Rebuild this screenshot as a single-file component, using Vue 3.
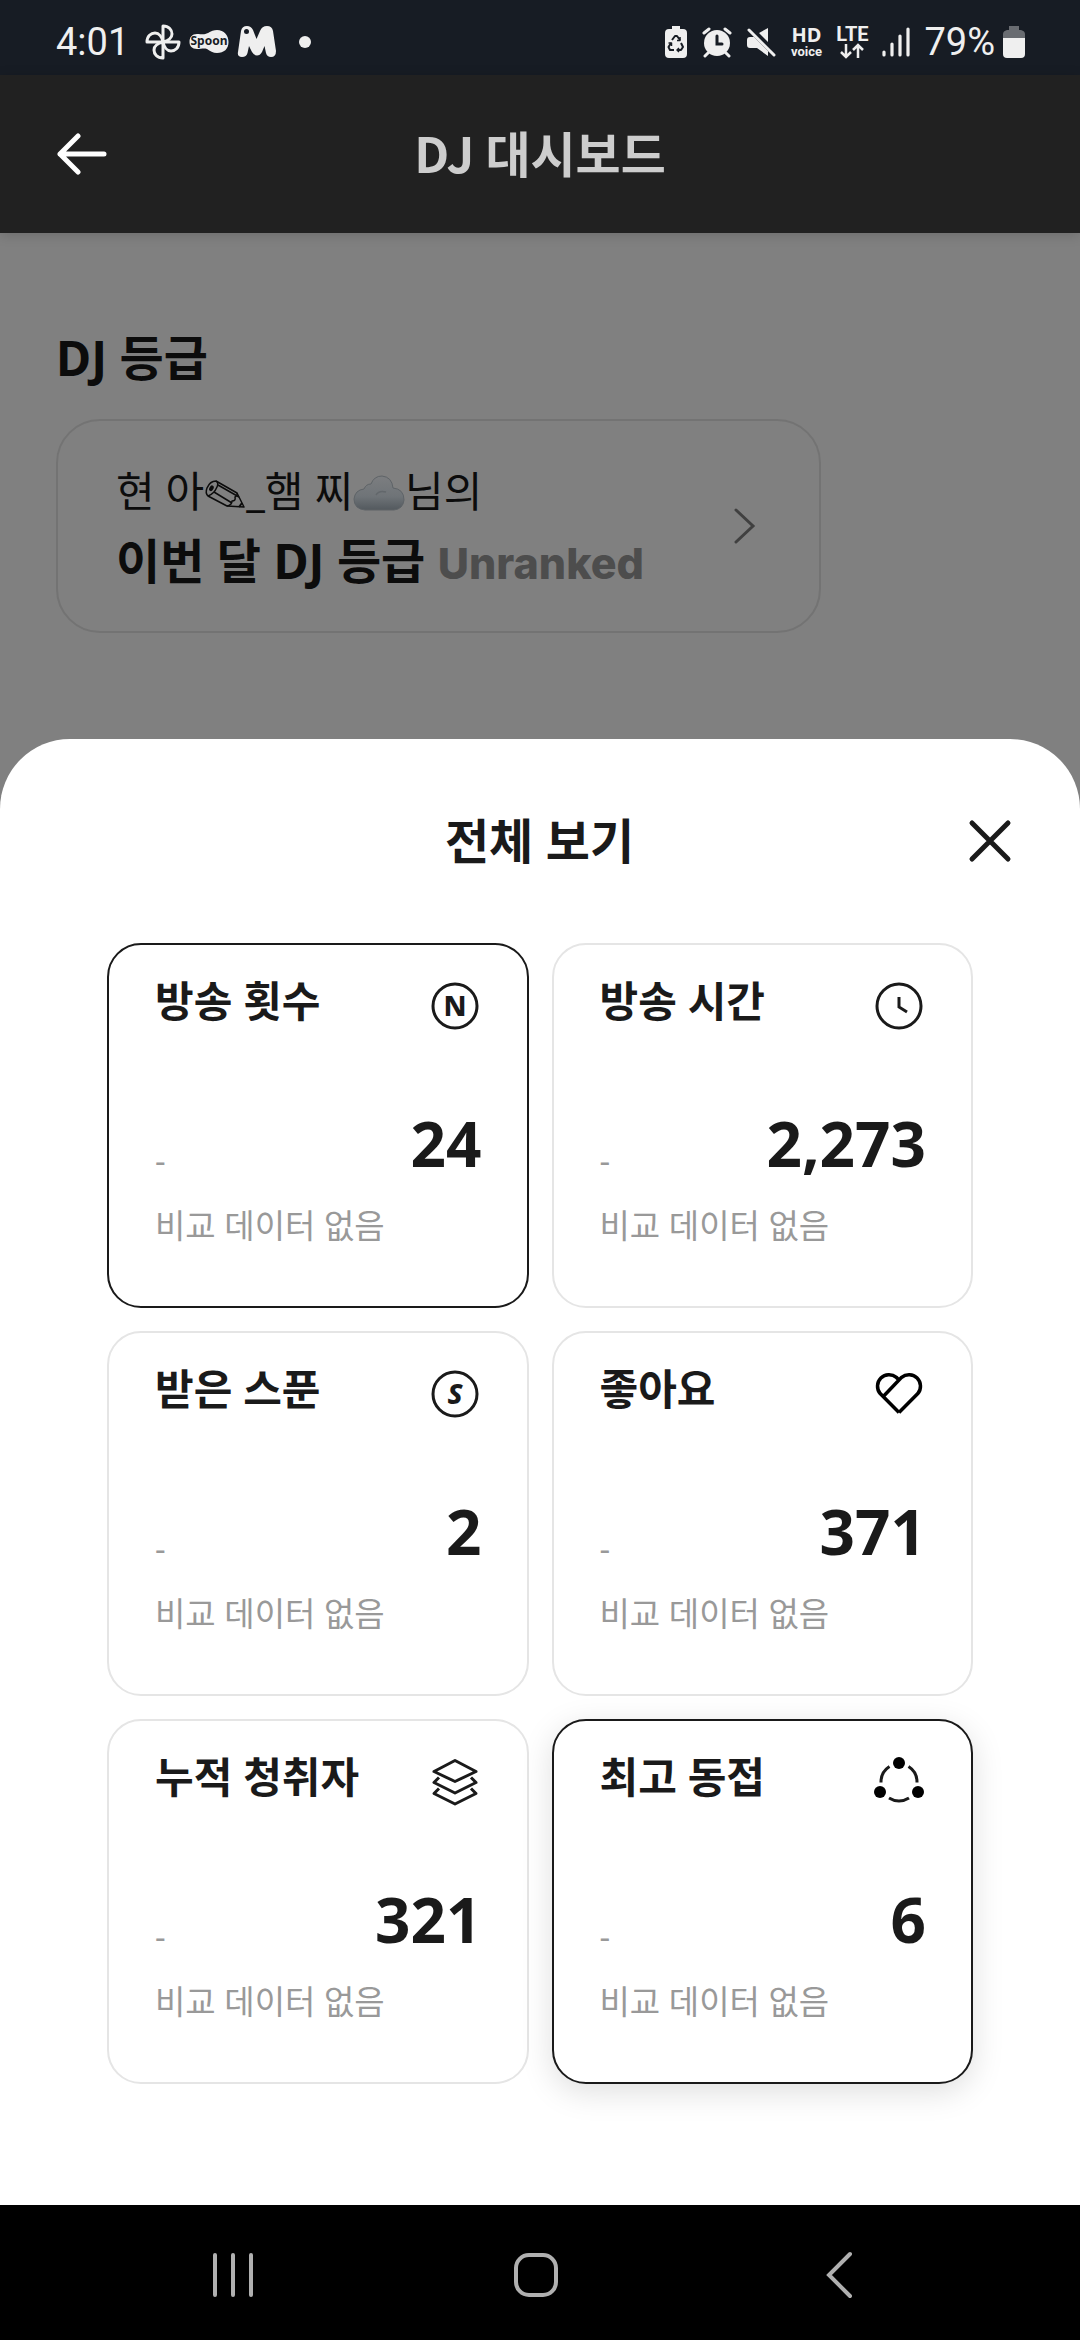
<script setup>
import { ref } from 'vue'

const nickname = { first: '현 아', middle: '_햄 찌', last: '님의' }

const stats = [
  { id: 'count', title: '방송 횟수', value: '24', selected: true },
  { id: 'time', title: '방송 시간', value: '2,273' },
  { id: 'spoon', title: '받은 스푼', value: '2' },
  { id: 'like', title: '좋아요', value: '371' },
  { id: 'listener', title: '누적 청취자', value: '321' },
  { id: 'peak', title: '최고 동접', value: '6', selected: true, raised: true },
]

const sheetTitle = ref('전체 보기')
</script>

<template>
  <div class="screen">
    <div class="status">
      <div class="status-left">
        <span class="clock">4:01</span>
        <svg class="pinwheel" width="36" height="36" viewBox="0 0 36 36" aria-hidden="true">
          <g fill="none" stroke="#efefef" stroke-width="3" stroke-linejoin="round">
            <path d="M18 18V2C24 2 27 6 27 10C27 14 23 17 18 18" />
            <path d="M18 18H34C34 24 30 27 26 27C22 27 19 23 18 18" />
            <path d="M18 18V34C12 34 9 30 9 26C9 22 13 19 18 18" />
            <path d="M18 18H2C2 12 6 9 10 9C14 9 17 13 18 18" />
          </g>
        </svg>
        <svg width="40" height="24" viewBox="0 0 40 24" aria-hidden="true">
          <path fill="#efefef" d="M8 4C13 4 15 5 19 3C22 1 25 0 28 0C35 0 39.500 5 39.500 12C39.500 19 35 23 28 23C24 23 21 21 18 19C15 18 12 19 8 19C3 19 0.500 16 0.500 12C0.500 7 3 4 8 4Z" />
          <text class="spoon-word" x="20" y="15" text-anchor="middle">Spoon</text>
        </svg>
        <svg width="40" height="32" viewBox="0 0 40 32" aria-hidden="true">
          <path fill="#efefef" d="M1 26L4 5Q5 0 10 0Q14 0 16 4L19.500 13L23 5Q25 0 30 0Q35 0 36 5L39 25Q39 31 34 31Q30 31 29 27L27.500 20L25 26Q23 29.500 20 29.500Q17 29.500 15 26L12 20L10.500 27Q9.500 31 5 31Q0 31 1 26Z" />
          <circle cx="9.500" cy="5.500" r="2.500" fill="#171c24" />
        </svg>
        <span class="dot"></span>
      </div>
      <div class="status-right">
        <svg width="24" height="34" viewBox="0 0 24 34" aria-hidden="true">
          <path fill="#efefef" d="M8 1H16V4H19Q23 4 23 8V29Q23 33 19 33H5Q1 33 1 29V8Q1 4 5 4H8Z" />
          <g fill="none" stroke="#171c24" stroke-width="2" stroke-linejoin="round">
            <path d="M8 15L11 11H13L16 15M17 18L19 22L17 25H13M10 25H6L4.500 22L7 18" />
            <path d="M16 12V15.500H13M15 23L13 25L15 27M4.500 18H7.500V21" stroke-width="1.500" />
          </g>
        </svg>
        <svg width="30" height="32" viewBox="0 0 30 32" aria-hidden="true">
          <circle cx="15" cy="17" r="13" fill="#efefef" />
          <path d="M2 7L7 3M28 7L23 3M6 27L3 30M24 27L27 30" stroke="#efefef" stroke-width="3" stroke-linecap="round" />
          <path d="M15 10V18H20" fill="none" stroke="#171c24" stroke-width="3" stroke-linecap="round" />
        </svg>
        <svg width="30" height="32" viewBox="0 0 30 32" aria-hidden="true">
          <path fill="#efefef" d="M1 14Q1 11 4 11H8L22 25V30L11 22H4Q1 22 1 19ZM13 7L22 2V16Z" />
          <path d="M3 4L28 29" stroke="#efefef" stroke-width="3" stroke-linecap="round" />
        </svg>
        <span class="hd"><b>HD</b><small>voice</small></span>
        <span class="lte">
          <b>LTE</b>
          <svg width="24" height="16" viewBox="0 0 24 16" aria-hidden="true">
            <path d="M6 1V13M1 9L6 14L11 9M18 15V3M13 7L18 2L23 7" fill="none" stroke="#efefef" stroke-width="2.500" />
          </svg>
        </span>
        <svg width="28" height="32" viewBox="0 0 28 32" aria-hidden="true">
          <path d="M2 26V29M10 18V29M18 10V29M26 3V29" stroke="#efefef" stroke-width="3.200" stroke-linecap="round" />
        </svg>
        <span class="power">
          <span class="clock">79%</span>
          <svg width="22" height="32" viewBox="0 0 22 32" aria-hidden="true">
            <path fill="#696c71" d="M6 0H16V4H18Q22 5 22 8V12H0V8Q0 5 4 4H6Z" />
            <path fill="#efefef" d="M0 12H22V28Q22 32 18 32H4Q0 32 0 28Z" />
          </svg>
        </span>
      </div>
    </div>

    <header class="appbar">
      <button class="icon-button" type="button" aria-label="뒤로">
        <svg width="50" height="42" viewBox="0 0 50 42">
          <path d="M21 3L3 21L21 39M3 21H47" fill="none" stroke="#fff" stroke-width="5" stroke-linecap="round" stroke-linejoin="round" />
        </svg>
      </button>
      <h1>DJ 대시보드</h1>
    </header>

    <main class="page">
      <h2>DJ 등급</h2>
      <a class="rank" href="#rank">
        <span class="rank-text">
          <span class="rank-name">
            {{ nickname.first }}<svg class="pencil" width="42" height="34" viewBox="0 0 42 34" aria-hidden="true">
              <g fill="none" stroke="#0c0c0c" stroke-width="1.500" stroke-linejoin="round">
                <path d="M12 4L33 16L40 30L23 29L4 19Q1 16 3 11Q6 4 12 4Z" />
                <path d="M12 4Q15 6 13 10Q10 17 4 19M14 8L35 20M10 15L28 26M33 16Q34 19 31 20Q32 24 28 24Q28 28 23 29" />
                <path d="M35 30L38 26" stroke-width="2" />
              </g>
              <ellipse cx="7.500" cy="11" rx="2" ry="3" transform="rotate(30 7 11)" fill="#0c0c0c" />
            </svg>{{ nickname.middle }}<svg class="cloud" width="52" height="36" viewBox="0 0 52 36" aria-hidden="true">
              <defs>
                <linearGradient id="sky" x1="0" y1="0" x2="0" y2="1">
                  <stop offset="0" stop-color="#7c7e80" />
                  <stop offset="0.600" stop-color="#6f7478" />
                  <stop offset="1" stop-color="#53595e" />
                </linearGradient>
              </defs>
              <path d="M12 35Q1 34 1 24Q2 15 11 14Q13 9 18 9Q21 1 29 1Q39 2 40 13Q51 14 51 25Q50 34 41 35Z" fill="url(#sky)" stroke="#5e6367" stroke-width="1" />
              <path d="M23 20Q26 15 33 17" fill="none" stroke="#62676b" stroke-width="1.500" />
            </svg>{{ nickname.last }}
          </span>
          <span class="rank-grade">이번 달 DJ 등급 <em>Unranked</em></span>
        </span>
        <svg width="22" height="36" viewBox="0 0 22 36" aria-hidden="true">
          <path d="M2 2L19 18L2 34" fill="none" stroke="#404040" stroke-width="3" stroke-linecap="round" />
        </svg>
      </a>
    </main>

    <section class="sheet" role="dialog" aria-labelledby="sheet-title">
      <div class="sheet-head">
        <h2 id="sheet-title">{{ sheetTitle }}</h2>
        <button class="icon-button" type="button" aria-label="닫기">
          <svg width="44" height="44" viewBox="0 0 44 44">
            <path d="M4 4L40 40M40 4L4 40" stroke="#1a1a1a" stroke-width="5" stroke-linecap="round" />
          </svg>
        </button>
      </div>

      <div class="grid">
        <button
          v-for="stat in stats"
          :key="stat.id"
          type="button"
          class="stat"
          :class="{ selected: stat.selected, raised: stat.raised }"
          :aria-pressed="!!stat.selected"
        >
          <span class="stat-head">
            <span class="stat-title">{{ stat.title }}</span>
            <svg width="54" height="54" viewBox="0 0 54 54" aria-hidden="true">
              <g fill="none" stroke="#1a1a1a" stroke-width="3">
                <template v-if="stat.id === 'count'">
                  <circle cx="27" cy="27" r="22" />
                  <text class="letter" x="27" y="37" text-anchor="middle">N</text>
                </template>
                <template v-else-if="stat.id === 'time'">
                  <circle cx="27" cy="27" r="22" />
                  <path d="M27 18V28L35 33" />
                </template>
                <template v-else-if="stat.id === 'spoon'">
                  <circle cx="27" cy="27" r="22" />
                  <text class="letter slanted" x="27" y="37" text-anchor="middle">S</text>
                </template>
                <template v-else-if="stat.id === 'like'">
                  <path stroke="#000" stroke-width="3.500" d="M27 45.400L8.200 26.600A11.500 11.500 0 0 1 24.400 10.400L27 13M10.800 30L29.600 10.400A11.500 11.500 0 0 1 45.800 26.600L27 45.400" />
                </template>
                <template v-else-if="stat.id === 'listener'">
                  <path stroke-linejoin="round" d="M27 5.500L48 16.500L27 26.500L6 16.500Z" />
                  <path stroke-linejoin="round" d="M11 22.500L6 27.500L27 38L48 27.500L43 22.500" />
                  <path stroke-linejoin="round" d="M11 33.500L6 38.500L27 49L48 38.500L43 33.500" />
                </template>
                <template v-else>
                  <path d="M17.500 11.500A18.500 18.500 0 0 0 9 27.500M36.500 11.500A18.500 18.500 0 0 1 45 27.500M17 43A18.500 18.500 0 0 0 37 43" />
                  <g fill="#000" stroke="none">
                    <circle cx="27" cy="8" r="6" />
                    <circle cx="8" cy="37" r="6" />
                    <circle cx="46" cy="37" r="6" />
                  </g>
                </template>
              </g>
            </svg>
          </span>
          <span class="stat-row">
            <span class="stat-diff">-</span>
            <span class="stat-value">{{ stat.value }}</span>
          </span>
          <span class="stat-note">비교 데이터 없음</span>
        </button>
      </div>
    </section>

    <nav class="navbar">
      <button class="icon-button" type="button" aria-label="최근 앱">
        <svg width="44" height="48" viewBox="0 0 44 48">
          <path d="M4 4V44M22 4V44M40 4V44" stroke="#b0b0b0" stroke-width="4" stroke-linecap="round" />
        </svg>
      </button>
      <button class="icon-button" type="button" aria-label="홈">
        <svg width="48" height="48" viewBox="0 0 48 48">
          <rect x="4" y="4" width="40" height="40" rx="13" fill="none" stroke="#b0b0b0" stroke-width="4" />
        </svg>
      </button>
      <button class="icon-button" type="button" aria-label="뒤로 가기">
        <svg width="28" height="48" viewBox="0 0 28 48">
          <path d="M25 3L4 24L25 45" fill="none" stroke="#b0b0b0" stroke-width="4" stroke-linecap="round" />
        </svg>
      </button>
    </nav>
  </div>
</template>

<style>
body {
  margin: 0;
  background: #000;
}
</style>

<style scoped>
.screen {
  display: flex;
  flex-direction: column;
  min-height: 100vh;
  background: #808080;
  color: #1a1a1a;
  font-family: "Noto Sans", "Noto Sans CJK KR", sans-serif;
}

svg {
  flex: none;
}

h1,
h2 {
  margin: 0;
  font-size: 48px;
  line-height: 70px;
  font-weight: 700;
}

.icon-button {
  display: flex;
  align-items: center;
  justify-content: center;
  padding: 0;
  border: 0;
  background: none;
  cursor: pointer;
}

.status {
  display: flex;
  align-items: center;
  justify-content: space-between;
  height: 75px;
  padding: 8px 55px 0 56px;
  box-sizing: border-box;
  background: #171c24;
  color: #efefef;
}

.status-left {
  display: flex;
  align-items: center;
  gap: 8px;
}

.pinwheel {
  margin-left: 8px;
}

.clock {
  font-family: Roboto, sans-serif;
  font-size: 38px;
  line-height: 44px;
}

.spoon-word {
  font: 700 12px "Noto Sans", sans-serif;
  fill: #171c24;
}

.dot {
  width: 12px;
  height: 12px;
  margin-left: 14px;
  border-radius: 50%;
  background: #efefef;
}

.status-right {
  display: flex;
  align-items: center;
  gap: 14px;
}

.hd,
.lte {
  display: flex;
  flex-direction: column;
  align-items: center;
  width: 32px;
  font-family: Roboto, sans-serif;
}

.hd b {
  font-family: "Noto Sans", sans-serif;
  font-size: 20px;
  line-height: 20px;
}

.hd small {
  font-size: 13px;
  font-weight: 700;
  line-height: 14px;
}

.lte b {
  font-size: 20px;
  font-weight: 700;
  line-height: 18px;
}

.power {
  display: flex;
  align-items: center;
  gap: 8px;
}

.appbar {
  display: grid;
  grid-template-columns: 50px 1fr 50px;
  align-items: center;
  height: 158px;
  padding: 0 57px;
  background: #212121;
  box-shadow: 0 2px 12px rgba(0, 0, 0, 0.16);
}

.appbar h1 {
  padding-bottom: 4px;
  color: #cdcdcd;
  font-family: "Noto Sans CJK KR", sans-serif;
  font-size: 49px;
  text-align: center;
}

.page {
  padding: 90px 56px 106px;
  color: #0c0c0c;
}

.rank {
  display: flex;
  align-items: center;
  justify-content: space-between;
  width: 79%;
  margin-top: 26px;
  padding: 35px 63px 35px 58px;
  box-sizing: border-box;
  border: 2px solid #737373;
  border-radius: 44px;
  color: inherit;
  text-decoration: none;
}

.rank-text {
  display: flex;
  flex-direction: column;
  white-space: nowrap;
}

.rank-name,
.rank-grade {
  height: 70px;
  line-height: 70px;
}

.rank-name {
  font-size: 42px;
}

.pencil,
.cloud {
  vertical-align: -4px;
}

.rank-grade {
  font-size: 48px;
  font-weight: 700;
}

.rank-grade em {
  color: #4d4d4d;
  font-family: Inter, sans-serif;
  font-size: 43px;
  font-style: normal;
  font-weight: 800;
  line-height: 44px;
}

.sheet {
  flex: 1;
  padding: 67px 0 100px;
  border-radius: 70px 70px 0 0;
  background: #fff;
}

.sheet-head {
  display: grid;
  grid-template-columns: 44px 1fr 44px;
  align-items: center;
  padding: 0 68px 0 67px;
}

.sheet-head h2 {
  grid-column: 2;
  text-align: center;
}

.grid {
  display: grid;
  grid-template-columns: 1fr 1fr;
  gap: 23px;
  margin-top: 67px;
  padding: 0 107px;
}

.stat {
  display: flex;
  flex-direction: column;
  padding: 34px 45px 58px 46px;
  border: 2px solid #e5e5e5;
  border-radius: 34px;
  background: #fff;
  color: #1a1a1a;
  font-family: inherit;
  text-align: left;
  cursor: pointer;
}

.stat.selected {
  border-color: #1a1a1a;
}

.stat.raised {
  box-shadow: 0 8px 32px rgba(0, 0, 0, 0.13);
}

.stat-head {
  display: flex;
  align-items: flex-start;
  justify-content: space-between;
}

.stat-title {
  font-size: 42px;
  font-weight: 700;
  line-height: 44px;
}

.letter {
  font: 800 28px "Noto Sans", sans-serif;
  fill: #1a1a1a;
  stroke: none;
}

.letter.slanted {
  font-style: italic;
}

.stat-row {
  display: flex;
  align-items: flex-end;
  justify-content: space-between;
  margin-top: 78px;
}

.stat-diff {
  color: #999;
  font-size: 33px;
  line-height: 28px;
}

.stat-value {
  font-size: 62px;
  font-weight: 700;
  line-height: 64px;
}

.stat-note {
  margin-top: 29px;
  color: #999;
  font-size: 33px;
  line-height: 44px;
}

.navbar {
  display: grid;
  grid-template-columns: repeat(3, 1fr);
  height: 135px;
  padding: 5px 90px 0 82px;
  box-sizing: border-box;
  background: #000;
}
</style>
